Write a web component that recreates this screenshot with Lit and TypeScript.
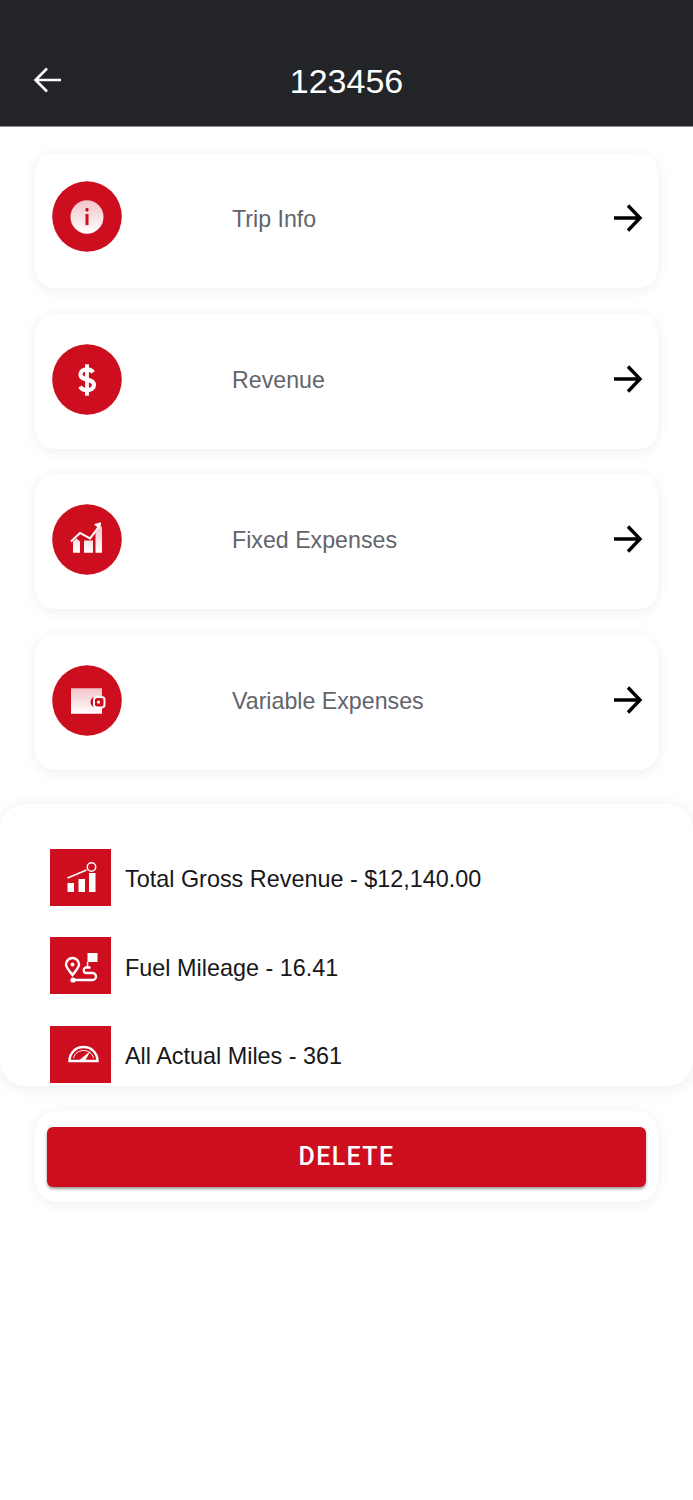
import { LitElement, html, css, svg } from 'lit';
import { customElement } from 'lit/decorators.js';

const white = '#fff';

// circle icons, drawn in a 70x70 box
const tripIcon = svg`
  <circle cx="35" cy="35.500" r="16.500" fill="url(#fade)"/>
  <rect x="33.500" y="26.500" width="3" height="3.500" rx="1" fill="#cd0e1f"/>
  <rect x="33.500" y="32.500" width="3" height="11" fill="#cd0e1f"/>`;
const revenueIcon = svg`
  <path d="M41 28c-1.200-2-3.300-3-6-3-3.700 0-6.500 1.800-6.500 5 0 6.500 13.500 3.500 13.500 10.500 0 3.200-3 5-7 5-3 0-5.500-1.200-7-3.500" fill="none" stroke="#fff" stroke-width="4.200"/>
  <path d="M35 20v31" stroke="#fff" stroke-width="3.800"/>`;
const fixedIcon = svg`
  <path d="M19 37l9-8.500 10 5.500 8.500-11" fill="none" stroke="#fff" stroke-width="2"/>
  <path d="M42 20l7-2-.5 8z" fill="#fff"/>
  <path d="M21 48V37l3.500-3 3.500 3v11zM32 48V36h9v12zM43.500 48V27l6.500-5v26z" fill="url(#fade)"/>`;
const walletIcon = svg`
  <path d="M19 23h31v8H44a5.500 5.500 0 0 0-5.500 5.500v0a5.500 5.500 0 0 0 5.500 5.500h6v6H19z" fill="url(#fade)"/>
  <rect x="42" y="31.500" width="10.500" height="10.500" rx="3" fill="none" stroke="#fff" stroke-width="2"/>
  <circle cx="46.500" cy="36.500" r="1.600" fill="#fff"/>`;

// square icons, drawn in a 60x57 box
const revenueSquare = svg`
  <rect x="17" y="34" width="6.500" height="9" fill="#fff"/>
  <rect x="28" y="30" width="6.500" height="13" fill="#fff"/>
  <rect x="38.500" y="24" width="6.500" height="19" fill="#fff"/>
  <path d="M17 29l12-5 7-3" fill="none" stroke="#fff" stroke-width="1.500"/>
  <circle cx="41" cy="18" r="4.200" fill="none" stroke="#fff" stroke-width="1.500"/>`;
const fuelSquare = svg`
  <path d="M22 38c-3-4-6.500-7.500-6.500-10.500a6.500 6.500 0 0 1 13 0c0 3-3.500 6.500-6.500 10.500z" fill="none" stroke="#fff" stroke-width="2.400"/>
  <circle cx="22" cy="27.500" r="2" fill="#fff"/>
  <rect x="37" y="16" width="10" height="9" fill="#fff"/>
  <path d="M37 25v5" stroke="#fff" stroke-width="1.500"/>
  <path d="M24 43h18a3.500 3.500 0 0 0 0-7h-7a3 3 0 0 1 0-5.500h5" fill="none" stroke="#fff" stroke-width="2.400"/>
  <circle cx="22.500" cy="43" r="2.600" fill="#fff"/>`;
const milesSquare = svg`
  <path d="M19 35c0-8.500 6.500-14 14-14s14 5.500 14 14z" fill="none" stroke="#fff" stroke-width="2.400"/>
  <path d="M23 32c1-4.500 5-7.500 10-7.500s9 3 10 7.500" fill="none" stroke="#fff" stroke-width="1"/>
  <path d="M29 34l11-9-5 9z" fill="#fff"/>`;

const cards = [
  { label: 'Trip Info', icon: tripIcon, lift: 4 },
  { label: 'Revenue', icon: revenueIcon, lift: 2 },
  { label: 'Fixed Expenses', icon: fixedIcon, lift: 2 },
  { label: 'Variable Expenses', icon: walletIcon, lift: 2 },
];

const stats = [
  { label: 'Total Gross Revenue - $12,140.00', icon: revenueSquare },
  { label: 'Fuel Mileage - 16.41', icon: fuelSquare },
  { label: 'All Actual Miles - 361', icon: milesSquare },
];

@customElement('app-root')
export class AppRoot extends LitElement {
  static styles = css`
    :host {
      display: block;
      width: 693px;
      height: 1500px;
      background: #fff;
      font-family: 'Liberation Sans', Arial, sans-serif;
      overflow: hidden;
    }
    .header {
      height: 126px;
      background: #232428;
      border-bottom: 1px solid #8c8c8e;
      display: flex;
      align-items: flex-end;
      justify-content: center;
      position: relative;
      color: #fff;
    }
    .title {
      font-size: 34px;
      line-height: 37px;
      margin-bottom: 26px;
    }
    .back {
      position: absolute;
      left: 33px;
      top: 67px;
      width: 28px;
      height: 26px;
    }
    .cards {
      display: flex;
      flex-direction: column;
      gap: 25.670px;
      padding: 26px 35px 0;
    }
    .card {
      height: 135px;
      border-radius: 20px;
      background: #fff;
      box-shadow: 0 2px 14px rgba(0, 0, 0, 0.07);
      display: flex;
      align-items: center;
      padding: 0 15px 0 17px;
      box-sizing: border-box;
    }
    .circle {
      width: 70px;
      height: 71px;
      flex: none;
      filter: blur(0.5px);
    }
    .card-label {
      flex: 1;
      margin-left: 110px;
      font-size: 23.200px;
      color: #62646c;
      padding-bottom: 2px;
    }
    .arrow {
      width: 30px;
      height: 30px;
      flex: none;
      margin-bottom: 5px;
    }
    .panel {
      margin-top: 34px;
      height: 282px;
      border-radius: 26px;
      background: #fff;
      box-shadow: 0 2px 16px rgba(0, 0, 0, 0.08);
      overflow: hidden;
      padding: 45px 0 0 50px;
      box-sizing: border-box;
      display: flex;
      flex-direction: column;
      gap: 31.500px;
    }
    .stat {
      display: flex;
      align-items: center;
      gap: 14px;
      flex: none;
      height: 57px;
      font-size: 23.400px;
      color: #17171a;
    }
    .square {
      width: 61px;
      height: 57px;
      flex: none;
      background: #cd0e1f;
      display: block;
    }
    .square svg {
      display: block;
      filter: blur(0.5px);
    }
    .stat span {
      padding-top: 5px;
    }
    .delete-wrap {
      margin: 25px 35px 0;
      height: 91px;
      border-radius: 22px;
      background: #fff;
      box-shadow: 0 2px 14px rgba(0, 0, 0, 0.07);
      padding: 16px 12px 0;
      box-sizing: border-box;
    }
    .delete {
      display: block;
      width: 100%;
      height: 60px;
      border: none;
      border-radius: 6px;
      background: #cd0e1f;
      color: #fff;
      font-family: Roboto, sans-serif;
      font-weight: 500;
      font-size: 25px;
      letter-spacing: 1.400px;
      padding: 0;
      box-shadow: 0 2px 3px rgba(0, 0, 0, 0.4);
    }
  `;

  render() {
    return html`
      <div class="header">
        <svg class="back" viewBox="0 0 28 26" fill="none" stroke="${white}" stroke-width="2.600">
          <path d="M28 13H3M14 1.500L2.500 13 14 24.500"/>
        </svg>
        <div class="title">123456</div>
      </div>

      <svg width="0" height="0" style="position:absolute">
        <defs>
          <linearGradient id="fade" x1="0" y1="0" x2="0" y2="1">
            <stop offset="0" stop-color="#f3c3c8"/>
            <stop offset="1" stop-color="#fff"/>
          </linearGradient>
        </defs>
      </svg>

      <div class="cards">
        ${cards.map(
          (c) => html`
            <div class="card">
              <svg class="circle" viewBox="0 0 70 70" preserveAspectRatio="none" style="margin-top:${-c.lift * 2}px">
                <circle cx="35" cy="35" r="34.800" fill="#cd0e1f"/>
                ${c.icon}
              </svg>
              <div class="card-label">${c.label}</div>
              <svg class="arrow" viewBox="0 0 30 30" fill="none" stroke="#000" stroke-width="3.400">
                <path d="M1 15h26M15 2.500L27 15 15 27.500"/>
              </svg>
            </div>
          `
        )}
      </div>

      <div class="panel">
        ${stats.map(
          (s) => html`
            <div class="stat">
              <div class="square">
                <svg width="61" height="57" viewBox="0 0 60 57">${s.icon}</svg>
              </div>
              <span>${s.label}</span>
            </div>
          `
        )}
      </div>

      <div class="delete-wrap">
        <button class="delete">DELETE</button>
      </div>
    `;
  }
}
